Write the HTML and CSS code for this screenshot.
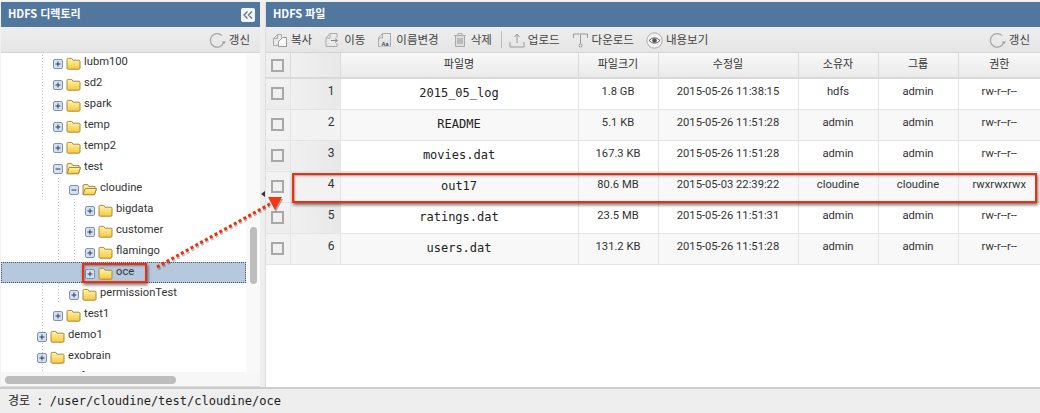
FILE: index.html
```html
<!DOCTYPE html>
<html lang="ko">
<head>
<meta charset="utf-8">
<title>HDFS</title>
<link rel="stylesheet" href="styles.css">
</head>
<body>
<svg class="defs" width="0" height="0" aria-hidden="true">
  <defs>
    <linearGradient id="fg" x1="0" y1="0" x2="0" y2="1"><stop offset="0" stop-color="#fff3b0"/><stop offset="1" stop-color="#f7c93c"/></linearGradient>
    <symbol id="folder" viewBox="0 0 15 13">
      <path d="M1 3.2V11a1.2 1.2 0 0 0 1.2 1.2h10.6A1.2 1.2 0 0 0 14 11V4.2A1 1 0 0 0 13 3.2H7L5.800 1.400H2.200A1.200 1.200 0 0 0 1 2.600Z" fill="url(#fg)" stroke="#a98a3e"/>
    </symbol>
    <symbol id="folder-open" viewBox="0 0 15 13">
      <path d="M1 3V11.500H12.500L14.500 5.500H13V3.400H6.800L5.800 1.600H2.200A1.200 1.200 0 0 0 1 3Z" fill="#f9e9a4" stroke="#a98a3e"/>
      <path d="M1 11.800L3.200 5.500H14.500L12.400 11.800Z" fill="url(#fg)" stroke="#a98a3e"/>
    </symbol>
    <symbol id="plus" viewBox="0 0 10 10">
      <rect x=".5" y=".5" width="9" height="9" rx="1.500" fill="#d5e1f0" stroke="#7b93b3"/>
      <path d="M2.500 5h5M5 2.500v5" stroke="#2b3f5c" stroke-width="1"/>
    </symbol>
    <symbol id="minus" viewBox="0 0 10 10">
      <rect x=".5" y=".5" width="9" height="9" rx="1.500" fill="#d5e1f0" stroke="#7b93b3"/>
      <path d="M2.500 5h5" stroke="#2b3f5c" stroke-width="1"/>
    </symbol>
    <symbol id="refresh" viewBox="0 0 17 17">
      <path d="M14.600 10.500A6.800 6.800 0 1 1 13 3.600" fill="none" stroke="#a8a8a8" stroke-width="1.300"/>
      <path d="M13 9.500h4l-2 2.600Z" fill="#9a9a9a"/>
    </symbol>
  </defs>
</svg>

<div class="app">
  <div class="panes">
    <section class="pane pane-left">
      <header class="pane-head">
        <span>HDFS 디렉토리</span>
        <button class="collapse" type="button">
          <svg width="12" height="10" viewBox="0 0 12 10"><path d="M5.500 1.500L2 5l3.500 3.500M10 1.500L6.500 5l3.500 3.500" fill="none" stroke="#5f7898" stroke-width="1.400"/></svg>
        </button>
      </header>
      <div class="toolbar toolbar-end">
        <span class="tool"><svg class="ico" width="17" height="17"><use href="#refresh"/></svg>갱신</span>
      </div>
      <div class="tree-wrap">
        <div class="tree">
          <div class="node lv1"><svg class="exp"><use href="#plus"/></svg><svg class="fld"><use href="#folder"/></svg><span>lubm100</span></div>
          <div class="node lv1"><svg class="exp"><use href="#plus"/></svg><svg class="fld"><use href="#folder"/></svg><span>sd2</span></div>
          <div class="node lv1"><svg class="exp"><use href="#plus"/></svg><svg class="fld"><use href="#folder"/></svg><span>spark</span></div>
          <div class="node lv1"><svg class="exp"><use href="#plus"/></svg><svg class="fld"><use href="#folder"/></svg><span>temp</span></div>
          <div class="node lv1"><svg class="exp"><use href="#plus"/></svg><svg class="fld"><use href="#folder"/></svg><span>temp2</span></div>
          <div class="node lv1"><svg class="exp"><use href="#minus"/></svg><svg class="fld"><use href="#folder-open"/></svg><span>test</span></div>
          <div class="node lv2"><svg class="exp"><use href="#minus"/></svg><svg class="fld"><use href="#folder-open"/></svg><span>cloudine</span></div>
          <div class="node lv3"><svg class="exp"><use href="#plus"/></svg><svg class="fld"><use href="#folder"/></svg><span>bigdata</span></div>
          <div class="node lv3"><svg class="exp"><use href="#plus"/></svg><svg class="fld"><use href="#folder"/></svg><span>customer</span></div>
          <div class="node lv3"><svg class="exp"><use href="#plus"/></svg><svg class="fld"><use href="#folder"/></svg><span>flamingo</span></div>
          <div class="node lv3 selected"><svg class="exp"><use href="#plus"/></svg><svg class="fld"><use href="#folder"/></svg><span>oce</span></div>
          <div class="node lv2"><svg class="exp"><use href="#plus"/></svg><svg class="fld"><use href="#folder"/></svg><span>permissionTest</span></div>
          <div class="node lv1"><svg class="exp"><use href="#plus"/></svg><svg class="fld"><use href="#folder"/></svg><span>test1</span></div>
          <div class="node lv0"><svg class="exp"><use href="#plus"/></svg><svg class="fld"><use href="#folder"/></svg><span>demo1</span></div>
          <div class="node lv0"><svg class="exp"><use href="#plus"/></svg><svg class="fld"><use href="#folder"/></svg><span>exobrain</span></div>
          <div class="node lv0"><svg class="exp"><use href="#plus"/></svg><svg class="fld"><use href="#folder"/></svg><span>hdfs</span></div>
        </div>
        <div class="vscroll"><div class="vthumb"></div></div>
      </div>
      <div class="hscroll"><div class="hthumb"></div></div>
    </section>

    <div class="splitter"><span class="split-arrow"></span></div>

    <section class="pane pane-right">
      <header class="pane-head"><span>HDFS 파일</span></header>
      <div class="toolbar">
        <span class="tool"><svg class="ico" width="16" height="16" viewBox="0 0 16 16"><path d="M1.500 6.500l4-4h4v3M5.500 2.500v4h-4v7h5" fill="none" stroke="#aaa"/><path d="M6.500 9.500l4-4h4v9h-8Z" fill="#f8f8f8" stroke="#999"/></svg>복사</span>
        <span class="tool"><svg class="ico" width="17" height="16" viewBox="0 0 17 16"><path d="M2 14.500V6l4-4.500h7V6M2 14.500h11V11M2 6h4V1.500" fill="none" stroke="#aaa"/><path d="M7 8.500h6M11 6.500l2.500 2-2.500 2" fill="none" stroke="#888"/></svg>이동</span>
        <span class="tool"><svg class="ico" width="16" height="16" viewBox="0 0 16 16"><path d="M1.500 14.500V6l4-4.500h8v13Z" fill="none" stroke="#aaa"/><path d="M1.500 6h4V1.500" fill="none" stroke="#aaa"/><rect x="3" y="8" width="10" height="6.500" fill="#dfe3e8"/><text x="8" y="13.500" class="aa">Aa</text></svg>이름변경</span>
        <span class="tool"><svg class="ico" width="17" height="16" viewBox="-2 0 17 16"><path d="M1 3.500h12M5 3.500V1.500h4v2" fill="none" stroke="#aaa"/><path d="M2.500 3.500h9v11h-9Z" fill="#ddd" stroke="#aaa"/><path d="M5 6v6M7 6v6M9 6v6" stroke="#999"/></svg>삭제</span>
        <span class="sep"></span>
        <span class="tool"><svg class="ico" width="16" height="16" viewBox="0 0 16 16"><path d="M1 10v5h14v-5" fill="none" stroke="#999"/><path d="M8 11V3M5.500 5L8 2l2.500 3" fill="none" stroke="#999"/></svg>업로드</span>
        <span class="tool"><svg class="ico" width="17" height="16" viewBox="-.5 0 17 16"><path d="M1 6V2h14v4" fill="none" stroke="#999"/><path d="M8 3v9" stroke="#999"/><circle cx="8" cy="13.500" r="1.500" fill="none" stroke="#999"/></svg>다운로드</span>
        <span class="tool"><svg class="ico" width="17" height="17" viewBox="0 0 17 17"><circle cx="8.500" cy="8.500" r="7.700" fill="#f2f2f2" stroke="#aaa"/><path d="M3 8.500Q8.500 3 14 8.500Q8.500 14 3 8.500Z" fill="#fff" stroke="#666"/><circle cx="8.500" cy="8.500" r="2.300" fill="#555"/></svg>내용보기</span>
        <span class="tool push"><svg class="ico" width="17" height="17"><use href="#refresh"/></svg>갱신</span>
      </div>
      <table class="files">
        <colgroup>
          <col class="c-check"><col class="c-num"><col class="c-name"><col class="c-size"><col class="c-date"><col class="c-own"><col class="c-grp"><col class="c-perm">
        </colgroup>
        <thead>
          <tr>
            <th class="cell-check"><span class="box"></span></th><th class="cell-num"></th><th>파일명</th><th>파일크기</th><th>수정일</th><th>소유자</th><th>그룹</th><th>권한</th>
          </tr>
        </thead>
        <tbody>
          <tr><td class="cell-check"><span class="box"></span></td><td class="cell-num">1</td><td class="mono">2015_05_log</td><td>1.8 GB</td><td>2015-05-26 11:38:15</td><td>hdfs</td><td>admin</td><td>rw-r--r--</td></tr>
          <tr class="alt"><td class="cell-check"><span class="box"></span></td><td class="cell-num">2</td><td class="mono">README</td><td>5.1 KB</td><td>2015-05-26 11:51:28</td><td>admin</td><td>admin</td><td>rw-r--r--</td></tr>
          <tr><td class="cell-check"><span class="box"></span></td><td class="cell-num">3</td><td class="mono">movies.dat</td><td>167.3 KB</td><td>2015-05-26 11:51:28</td><td>admin</td><td>admin</td><td>rw-r--r--</td></tr>
          <tr class="alt"><td class="cell-check"><span class="box"></span></td><td class="cell-num">4</td><td class="mono">out17</td><td>80.6 MB</td><td>2015-05-03 22:39:22</td><td>cloudine</td><td>cloudine</td><td>rwxrwxrwx</td></tr>
          <tr><td class="cell-check"><span class="box"></span></td><td class="cell-num">5</td><td class="mono">ratings.dat</td><td>23.5 MB</td><td>2015-05-26 11:51:31</td><td>admin</td><td>admin</td><td>rw-r--r--</td></tr>
          <tr class="alt"><td class="cell-check"><span class="box"></span></td><td class="cell-num">6</td><td class="mono">users.dat</td><td>131.2 KB</td><td>2015-05-26 11:51:28</td><td>admin</td><td>admin</td><td>rw-r--r--</td></tr>
        </tbody>
      </table>
    </section>
  </div>
  <footer class="status">경로 : /user/cloudine/test/cloudine/oce</footer>
</div>

<div class="mark mark-row"></div>
<div class="mark mark-node"></div>
<svg class="callout" width="1040" height="413" viewBox="0 0 1040 413" aria-hidden="true">
  <line class="callout-shadow" x1="158" y1="269" x2="270" y2="206"/>
  <line class="callout-line" x1="157" y1="267" x2="270" y2="204"/>
  <path class="callout-head-shadow" d="M269 199H283L276 212Z"/>
  <path class="callout-head" d="M268 197H282L275 210Z"/>
</svg>
</body>
</html>
```

FILE: styles.css
```css
* { box-sizing: border-box; }
html, body { margin: 0; height: 100%; }
body {
  position: relative;
  width: 1040px;
  height: 413px;
  overflow: hidden;
  background: #f1f1f1;
  font-family: Roboto, "Noto Sans CJK KR", sans-serif;
  font-size: 12px;
  color: #333;
}
.defs { position: absolute; }
.app { display: flex; flex-direction: column; height: 100%; padding-top: 2px; }
.panes { flex: 1; display: flex; min-height: 0; }
.pane { display: flex; flex-direction: column; min-width: 0; background: #fff; }
.pane-left { width: 259px; margin-left: 1px; }
.pane-right { flex: 1; }
.splitter { width: 6px; background: #eee; display: flex; flex-direction: column; align-items: center; border-right: 1px solid #ddd; padding-top: 189px; }
.split-arrow { width: 0; height: 0; border: 3px solid transparent; border-right: 4px solid #333; border-left: 0; }
.pane-head {
  height: 25px;
  flex: none;
  display: flex;
  align-items: center;
  justify-content: space-between;
  padding: 0 5px 4px 7px;
  background: #52779f;
  color: #fff;
  font-family: "Noto Sans CJK KR", sans-serif;
  font-weight: 700;
  font-size: 11px;
}
.collapse {
  width: 14px; height: 14px; padding: 0; margin: 4px 0 0; border: 0; border-radius: 2px;
  background: #f4f6f8; display: flex; align-items: center; justify-content: center;
}
.toolbar {
  height: 26px;
  flex: none;
  display: flex;
  align-items: center;
  gap: 12px;
  padding: 0 10px 0 6px;
  background: linear-gradient(#eee, #e5e5e5);
  border-bottom: 1px solid #d4d4d4;
  font-family: "Noto Sans CJK KR", sans-serif;
  font-size: 11.5px;
  color: #444;
}
.toolbar-end { justify-content: flex-end; }
.tool { display: flex; align-items: center; gap: 3px; white-space: nowrap; padding-bottom: 1px; line-height: 16px; }
.ico { flex: none; margin-top: 2px; }
.aa { font: 700 5.500px "Liberation Sans", sans-serif; fill: #445; text-anchor: middle; }
.sep { width: 1px; height: 17px; background: #bbb; margin: 0 -5px 0 -3px; }
.push { margin-left: auto; }

.tree-wrap { flex: 1; display: flex; min-height: 0; background: #fff; }
.tree { flex: 1; min-width: 0; overflow: hidden; font-family: Roboto, sans-serif; font-size: 11.2px; color: #333; }
.node {
  height: 21px;
  display: flex;
  align-items: center;
  white-space: nowrap;
  background-repeat: repeat-y;
  background-size: 1px 3px;
  background-image: linear-gradient(#c4c4c4 1px, transparent 1px), linear-gradient(#c4c4c4 1px, transparent 1px);
}
.node:first-child { margin-top: -1px; }
.exp { width: 10px; height: 10px; flex: none; margin-top: 3px; }
.fld { width: 15px; height: 13px; flex: none; margin-left: 3px; margin-right: 3px; margin-top: 1px; }
.node span { margin-top: -2px; }
.lv0 { padding-left: 36px; background-position: 41px 0, -5px 0; }
.lv1 { padding-left: 52px; background-position: 41px 0, -5px 0; }
.lv2 { padding-left: 68px; background-position: 41px 0, 57px 0; }
.lv3 { padding-left: 84px; background-position: 57px 0, 73px 0; }
.selected { background: #b6c8dd; outline: 1px dotted #44556a; outline-offset: -1px; }
.vscroll { width: 14px; flex: none; background: #f9f9f9; display: flex; justify-content: center; }
.vthumb { width: 7px; height: 57px; margin-top: 174px; border-radius: 4px; background: #bdbdbd; }
.hscroll { height: 15px; flex: none; background: #f7f7f7; padding: 4px 0 0 4px; border-bottom: 1px solid #ddd; }
.hthumb { width: 171px; height: 8px; border-radius: 4px; background: #bdbdbd; }

.files { width: 100%; table-layout: fixed; border-collapse: collapse; font-family: Roboto, "Noto Sans CJK KR", sans-serif; font-size: 11.2px; color: #333; }
.c-check { width: 24px; } .c-num { width: 50px; } .c-name { width: 238px; } .c-size { width: 80px; }
.c-date { width: 140px; } .c-own { width: 80px; } .c-grp { width: 80px; } .c-perm { width: 82px; }
.files th {
  height: 25px;
  padding: 0 0 4px;
  background: linear-gradient(#f8f8f8, #eaeaea);
  border: 1px solid #d9d9d9;
  border-width: 0 1px 2px 0;
  font-family: "Noto Sans CJK KR", sans-serif;
  font-weight: 400;
  font-size: 11px;
  text-align: center;
}
.files td { height: 31px; padding: 0 0 5px; border: 1px solid #e4e4e4; border-width: 0 1px 1px 0; text-align: center; }
.files tr.alt td { background: #f8f8f8; }
.files th:last-child, .files td:last-child { border-right: 0; }
.files td.cell-check, .files th.cell-check { background: linear-gradient(#f2f2f2, #ececec); padding: 0; }
.files td.cell-num, .files th.cell-num { background: linear-gradient(to right, #f0f0f0, #e8e8e8); text-align: right; padding-right: 5px; font-size: 12px; }
.files tr.alt td.cell-num, .files tr.alt td.cell-check { background: #f2f2f2; }
.box { display: block; width: 13px; height: 13px; margin: 0 0 0 5px; border: 2px solid #a8a8a8; background: #f0f0f0; }
.files td.mono { font-family: "DejaVu Sans Mono", monospace; font-size: 12px; color: #222; padding: 1px 0 2px; }

.status {
  height: 26px;
  flex: none;
  display: flex;
  align-items: center;
  padding: 0 0 3px 8px;
  background: #eee;
  border-top: 2px solid #ccc;
  font-family: "DejaVu Sans Mono", "Noto Sans CJK KR", monospace;
  font-size: 12px;
  word-spacing: -1px;
  color: #222;
}

.mark { position: absolute; border: 2px solid #f22c0c; box-shadow: 1px 2px 3px rgba(0,0,0,.55), inset 1px 1px 2px rgba(0,0,0,.35); }
.mark-row { left: 292px; top: 173px; width: 745px; height: 30px; }
.mark-node { left: 82px; top: 263px; width: 65px; height: 20px; }
.callout { position: absolute; left: 0; top: 0; pointer-events: none; }
.callout-line { stroke: #f22c0c; stroke-width: 3; stroke-dasharray: 3 2.500; }
.callout-shadow { stroke: rgba(0,0,0,.25); stroke-width: 3; stroke-dasharray: 3 2.500; }
.callout-head { fill: #f5380f; }
.callout-head-shadow { fill: rgba(0,0,0,.3); }
```
